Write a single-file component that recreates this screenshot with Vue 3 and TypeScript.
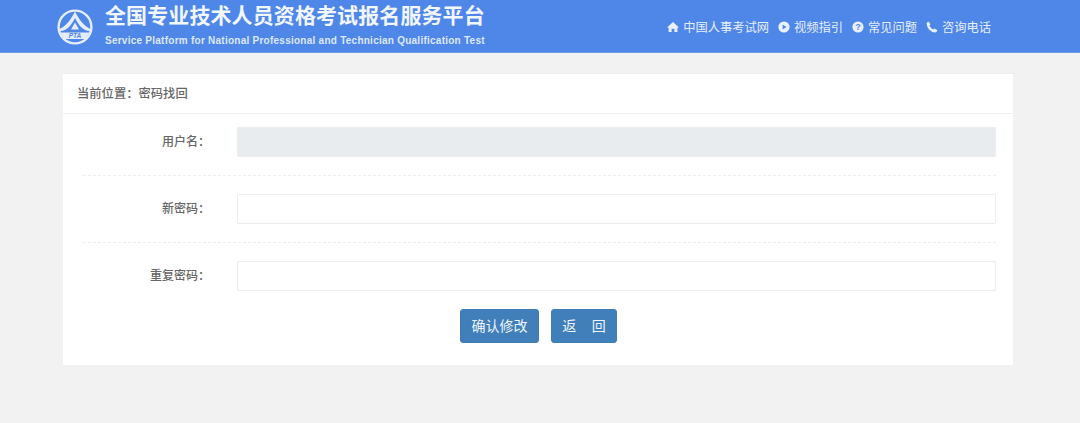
<script setup lang="ts">
const navItems = [
  { label: '中国人事考试网', icon: 'home' },
  { label: '视频指引', icon: 'play' },
  { label: '常见问题', icon: 'help' },
  { label: '咨询电话', icon: 'phone' },
]
</script>

<template>
  <div class="page">
    <header class="top">
      <div class="brand">
        <svg class="logo" viewBox="0 0 36 36" width="36" height="36">
          <circle cx="18" cy="18" r="16.4" fill="none" stroke="#e4edf9" stroke-width="2.4" />
          <path d="M18 2.5 Q13 12 9 15.5 Q6 18.5 2.5 20 L2.5 22.5 Q9 21.5 13 17 Q16 13.5 18 9 Q20 13.5 23 17 Q27 21.5 33.5 22.5 L33.5 20 Q30 18.5 27 15.5 Q23 12 18 2.5 Z" fill="#e4edf9" />
          <path d="M18 13.5 L14 20.5 H22 Z" fill="#e4edf9" />
          <path d="M3.5 23.5 H32.5 L29 30 H7 Z" fill="#e4edf9" />
          <text x="18" y="29" class="logo-text">PTA</text>
        </svg>
        <div class="titles">
          <h1>全国专业技术人员资格考试报名服务平台</h1>
          <p>Service Platform for National Professional and Technician Qualification Test</p>
        </div>
      </div>
      <nav class="nav">
        <a v-for="item in navItems" :key="item.label" class="nav-item">
          <svg viewBox="0 0 12 12" width="12" height="12">
            <path v-if="item.icon === 'home'" d="M6 1 L12 6.4 H10.4 V11 H7.4 V7.8 H4.6 V11 H1.6 V6.4 H0 Z" fill="#eaf1fc" />
            <template v-else-if="item.icon === 'play'">
              <circle cx="6" cy="6" r="5.6" fill="#eaf1fc" />
              <path d="M4.6 3.4 L8.6 6 L4.6 8.6 Z" fill="#4f87e8" />
            </template>
            <template v-else-if="item.icon === 'help'">
              <circle cx="6" cy="6" r="5.6" fill="#eaf1fc" />
              <text x="6" y="9" class="help-mark">?</text>
            </template>
            <path v-else d="M2.6 .6 L4.4 3.6 L3.4 4.8 Q4.6 7 7 8.4 L8.4 7.4 L11.4 9.2 Q11 11.2 9.2 11.4 Q5.4 11 3 8.4 Q.8 5.8 .6 2.6 Q1 1 2.6 .6 Z" fill="#eaf1fc" />
          </svg>
          <span>{{ item.label }}</span>
        </a>
      </nav>
    </header>

    <main class="card">
      <div class="crumb">当前位置：密码找回</div>
      <form class="form" @submit.prevent>
        <div class="row">
          <label>用户名：</label>
          <input class="field" type="text" disabled />
        </div>
        <div class="row">
          <label>新密码：</label>
          <input class="field" type="password" />
        </div>
        <div class="row last">
          <label>重复密码：</label>
          <input class="field" type="password" />
        </div>
        <div class="actions">
          <button type="button">确认修改</button>
          <button type="button" class="back">返&nbsp;&nbsp;&nbsp;&nbsp;回</button>
        </div>
      </form>
    </main>
  </div>
</template>

<style>
html,
body {
  margin: 0;
  background: #f2f2f2;
}
</style>

<style scoped>
.page {
  height: 423px;
  background: #f2f2f2;
  font-family: "Liberation Sans", "Noto Sans CJK SC", sans-serif;
  overflow: hidden;
}

.top {
  height: 52px;
  background: #4f87e8;
  border-bottom: 1px solid #6f9be6;
  box-sizing: content-box;
  display: flex;
  justify-content: space-between;
  padding: 0 89px 0 57px;
}

.brand {
  display: flex;
  align-items: flex-start;
  gap: 12px;
}

.logo {
  flex: none;
  margin-top: 9px;
}

.logo-text {
  font-size: 6.5px;
  font-style: italic;
  font-weight: 700;
  fill: #4f87e8;
  text-anchor: middle;
}

.titles {
  color: #f2f6fd;
}

.titles h1 {
  margin: 4px 0 0;
  font-size: 21px;
  line-height: 24px;
  font-weight: 700;
  white-space: nowrap;
  letter-spacing: .1px;
}

.titles p {
  margin: 7px 0 0;
  font-size: 10px;
  line-height: 12px;
  font-weight: 700;
  white-space: nowrap;
  color: #dde8fa;
  letter-spacing: .25px;
}

.nav {
  display: flex;
  align-items: center;
  gap: 9px;
  margin-top: 1px;
}

.nav-item {
  display: flex;
  align-items: center;
  gap: 4px;
  font-size: 12.25px;
  color: #e6eefb;
  white-space: nowrap;
}

.help-mark {
  font-size: 9px;
  font-weight: 700;
  fill: #4f87e8;
  text-anchor: middle;
}

.card {
  margin: 20px 67px 0 63px;
  height: 292px;
  background: #fff;
  border-top: 1px solid #ececec;
  box-sizing: border-box;
}

.crumb {
  height: 39px;
  line-height: 40px;
  padding-left: 14px;
  font-size: 12.3px;
  font-weight: 500;
  color: #666;
  border-bottom: 1px solid #f0f0f0;
}

.form {
  padding: 13px 17px 0 20px;
}

.row {
  display: flex;
  align-items: center;
  height: 30px;
  padding-bottom: 18px;
  margin-bottom: 18px;
  border-bottom: 1px dashed #eeeeee;
  box-sizing: content-box;
}

.row.last {
  border-bottom: 0;
  padding-bottom: 0;
  margin-bottom: 18px;
}

label {
  width: 127px;
  flex: none;
  text-align: right;
  font-size: 12px;
  font-weight: 500;
  color: #666;
  white-space: nowrap;
  padding-bottom: 3px;
}

.field {
  flex: 1;
  margin-left: 27px;
  height: 30px;
  box-sizing: border-box;
  border: 1px solid #ececec;
  background: #fff;
  outline: none;
  padding: 0 10px;
  border-radius: 1px;
}

.field:disabled {
  background: #e9ecef;
  border-color: #eceef0;
}

.actions {
  display: flex;
  justify-content: center;
  gap: 12px;
  padding-right: 2px;
}

button {
  height: 34px;
  width: 79px;
  padding: 0 0 3px;
  border: 1px solid #3f7db5;
  border-radius: 3px;
  background: #407fba;
  color: #eef4fa;
  font-family: inherit;
  font-size: 14px;
}

button.back {
  width: 66px;
}
</style>
